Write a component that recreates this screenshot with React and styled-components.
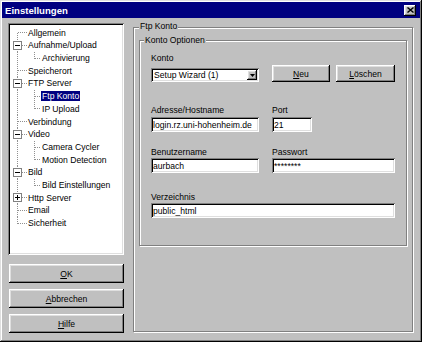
import React from 'react';
import styled, { createGlobalStyle } from 'styled-components';

const GlobalStyle = createGlobalStyle`
  body {
    margin: 0;
    background: #c0c0c0;
  }
`;

const raised = `
  box-shadow: inset -1px -1px #000, inset 1px 1px #fff,
    inset -2px -2px #808080, inset 2px 2px #dfdfdf;
`;

const sunken = `
  box-shadow: inset 1px 1px #808080, inset -1px -1px #fff,
    inset 2px 2px #000, inset -2px -2px #dfdfdf;
`;

const Window = styled.div`
  width: 422px;
  height: 342px;
  box-sizing: border-box;
  padding: 2px;
  background: #c0c0c0;
  box-shadow: inset -1px -1px #000, inset 1px 1px #dfdfdf,
    inset -2px -2px #808080, inset 2px 2px #fff;
  display: flex;
  flex-direction: column;
  font-family: "Liberation Sans", Arial, sans-serif;
  font-size: 8.6px;
  color: #000;
`;

const TitleBar = styled.div`
  height: 16px;
  background: #000080;
  color: #fff;
  display: flex;
  align-items: center;
  justify-content: space-between;
  padding: 0 4px 0 3px;
  font-weight: bold;
  font-size: 9.6px;
`;

const CloseButton = styled.div`
  width: 12px;
  height: 11px;
  background: #c0c0c0;
  ${raised}
  display: flex;
  align-items: center;
  justify-content: center;
`;

const Body = styled.div`
  flex: 1;
  display: flex;
  gap: 9px;
  padding: 0 7px 0 6px;
`;

const Sidebar = styled.div`
  width: 116px;
  display: flex;
  flex-direction: column;
  padding-top: 5px;
`;

const Tree = styled.div`
  height: 232px;
  box-sizing: border-box;
  background: #fff;
  ${sunken}
  padding: 3.35px 2px 2px 2px;
`;

const TreeRow = styled.div`
  height: 12.7px;
  display: flex;
  align-items: center;
  svg {
    flex: none;
  }
`;

const TreeLabel = styled.span`
  padding: 0 1px;
  line-height: 10px;
  white-space: nowrap;
  background: ${p => (p.$selected ? '#000080' : 'transparent')};
  color: ${p => (p.$selected ? '#fff' : '#000')};
`;

const ButtonStack = styled.div`
  display: flex;
  flex-direction: column;
  gap: 6px;
  margin: 9px 0 0 1px;
`;

const Button = styled.div`
  width: ${p => p.$w}px;
  height: ${p => p.$h}px;
  box-sizing: border-box;
  background: #c0c0c0;
  ${raised}
  display: flex;
  align-items: center;
  justify-content: center;
  line-height: 10px;
  u {
    text-decoration: underline;
    text-underline-offset: 1px;
  }
`;

const Group = styled.div`
  box-sizing: border-box;
  border: 1px solid #808080;
  box-shadow: 1px 1px 0 #fff, inset 1px 1px 0 #fff;
  margin-top: ${p => p.$top}px;
  width: ${p => (p.$w ? `${p.$w}px` : 'auto')};
  height: ${p => (p.$h ? `${p.$h}px` : 'auto')};
  padding: ${p => p.$pad};
`;

const Caption = styled.div`
  width: fit-content;
  margin: ${p => p.$m};
  padding: 0 1px;
  line-height: 10px;
  background: #c0c0c0;
  white-space: nowrap;
`;

const FormRow = styled.div`
  display: grid;
  grid-template-columns: 108px 123px;
  column-gap: 13px;
  align-items: end;
  margin-top: ${p => p.$top}px;
`;

const Field = styled.div`
  display: flex;
  flex-direction: column;
  grid-column: ${p => (p.$wide ? '1 / -1' : 'auto')};
`;

const Label = styled.div`
  line-height: 10px;
  margin-bottom: ${p => p.$gap}px;
  white-space: nowrap;
`;

const TextBox = styled.input`
  width: ${p => p.$w}px;
  height: 15px;
  box-sizing: border-box;
  border: 0;
  margin: 0;
  padding: 0 2px;
  font: inherit;
  color: #000;
  background: #fff;
  ${sunken}
  outline: none;
`;

const Select = styled.div`
  width: 108px;
  height: 14px;
  box-sizing: border-box;
  background: #fff;
  ${sunken}
  display: flex;
  align-items: center;
  justify-content: space-between;
  padding: 2px 2px 2px 3px;
  line-height: 10px;
`;

const DropButton = styled.div`
  width: 10px;
  height: 10px;
  background: #c0c0c0;
  ${raised}
  display: flex;
  align-items: center;
  justify-content: center;
`;

const ButtonPair = styled.div`
  display: flex;
  gap: 6px;
`;

const TREE = [
  { label: 'Allgemein' },
  { label: 'Aufnahme/Upload', toggle: 'minus' },
  { label: 'Archivierung', child: true, lastChild: true },
  { label: 'Speicherort' },
  { label: 'FTP Server', toggle: 'minus' },
  { label: 'Ftp Konto', child: true, selected: true },
  { label: 'IP Upload', child: true, lastChild: true },
  { label: 'Verbindung' },
  { label: 'Video', toggle: 'minus' },
  { label: 'Camera Cycler', child: true },
  { label: 'Motion Detection', child: true, lastChild: true },
  { label: 'Bild', toggle: 'minus' },
  { label: 'Bild Einstellungen', child: true, lastChild: true },
  { label: 'Http Server', toggle: 'plus' },
  { label: 'Email' },
  { label: 'Sicherheit', last: true }
];

const H = 12.7;
const M = 6.5;
const dots = { stroke: '#909090', strokeDasharray: '1 1' };

function TreeLines({ item, first }) {
  if (item.child) {
    return (
      <svg width={31} height={H} shapeRendering="crispEdges">
        <line x1={7.5} y1={0} x2={7.5} y2={H} {...dots} />
        <line x1={24.5} y1={0} x2={24.5} y2={item.lastChild ? M : H} {...dots} />
        <line x1={25} y1={M} x2={31} y2={M} {...dots} />
      </svg>
    );
  }
  return (
    <svg width={17} height={H} shapeRendering="crispEdges">
      <line x1={7.5} y1={first ? M : 0} x2={7.5} y2={item.last ? M : H} {...dots} />
      <line x1={8} y1={M} x2={17} y2={M} {...dots} />
      {item.toggle && (
        <>
          <rect x={3.5} y={M - 4} width={8} height={8} fill="#fff" stroke="#808080" />
          <line x1={5} y1={M} x2={10} y2={M} stroke="#000" />
          {item.toggle === 'plus' && (
            <line x1={7.5} y1={M - 2.5} x2={7.5} y2={M + 2.5} stroke="#000" />
          )}
        </>
      )}
    </svg>
  );
}

export default function App() {
  return (
    <>
      <GlobalStyle />
      <Window>
        <TitleBar>
          <span>Einstellungen</span>
          <CloseButton>
            <svg width="7" height="6" viewBox="0 0 7 6">
              <path d="M0.5 0.5 L6.5 5.5 M6.5 0.5 L0.5 5.5" stroke="#000" strokeWidth="1.4" />
            </svg>
          </CloseButton>
        </TitleBar>
        <Body>
          <Sidebar>
            <Tree>
              {TREE.map((item, i) => (
                <TreeRow key={item.label}>
                  <TreeLines item={item} first={i === 0} />
                  <TreeLabel $selected={item.selected}>{item.label}</TreeLabel>
                </TreeRow>
              ))}
            </Tree>
            <ButtonStack>
              <Button $w={115} $h={19}><span><u>O</u>K</span></Button>
              <Button $w={115} $h={19}><span><u>A</u>bbrechen</span></Button>
              <Button $w={115} $h={19}><span><u>H</u>ilfe</span></Button>
            </ButtonStack>
          </Sidebar>

          <Group $top={9} $w={280} $h={305} $pad="0 5px">
            <Caption $m="-7px 0 0 0">Ftp Konto</Caption>
            <Group $top={9} $pad="0 11px 27px 11px">
              <Caption $m="-6px 0 0 -7px">Konto Optionen</Caption>
              <FormRow $top={8}>
                <Field>
                  <Label $gap={5}>Konto</Label>
                  <Select>
                    <span>Setup Wizard (1)</span>
                    <DropButton>
                      <svg width="5" height="3" viewBox="0 0 5 3">
                        <path d="M0 0 H5 L2.5 3 Z" fill="#000" />
                      </svg>
                    </DropButton>
                  </Select>
                </Field>
                <ButtonPair>
                  <Button $w={58} $h={17}><span><u>N</u>eu</span></Button>
                  <Button $w={59} $h={17}><span><u>L</u>öschen</span></Button>
                </ButtonPair>
              </FormRow>
              <FormRow $top={23}>
                <Field>
                  <Label $gap={2}>Adresse/Hostname</Label>
                  <TextBox $w={108} readOnly value="login.rz.uni-hohenheim.de" />
                </Field>
                <Field>
                  <Label $gap={2}>Port</Label>
                  <TextBox $w={40} readOnly value="21" />
                </Field>
              </FormRow>
              <FormRow $top={15}>
                <Field>
                  <Label $gap={1}>Benutzername</Label>
                  <TextBox $w={108} readOnly value="aurbach" />
                </Field>
                <Field>
                  <Label $gap={1}>Passwort</Label>
                  <TextBox $w={123} readOnly value="********" />
                </Field>
              </FormRow>
              <FormRow $top={19}>
                <Field $wide>
                  <Label $gap={1}>Verzeichnis</Label>
                  <TextBox $w={244} readOnly value="public_html" />
                </Field>
              </FormRow>
            </Group>
          </Group>
        </Body>
      </Window>
    </>
  );
}
